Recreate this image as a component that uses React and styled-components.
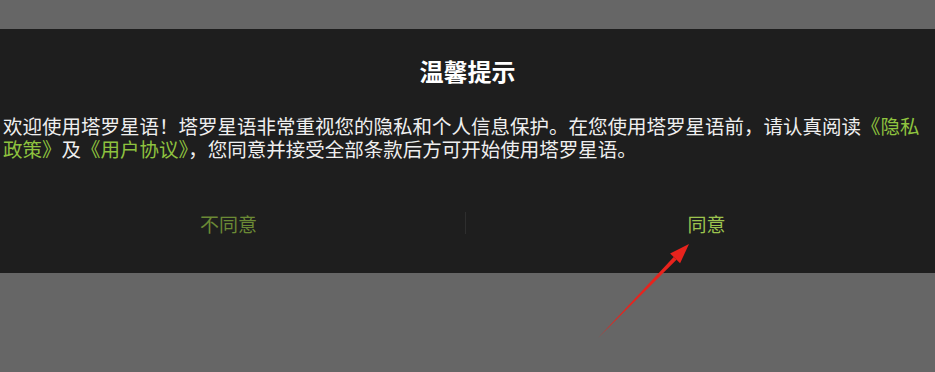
import React from "react";
import styled, { createGlobalStyle } from "styled-components";

const Global = createGlobalStyle`
  html, body { margin: 0; padding: 0; background: #666666; }
  body { font-family: "Noto Sans CJK SC", "Noto Sans", sans-serif; }
`;

const Page = styled.div`
  position: relative;
  width: 935px;
  height: 372px;
  padding-top: 29px;
  box-sizing: border-box;
  overflow: hidden;
`;

const Dialog = styled.div`
  background: #1e1e1e;
  height: 244px;
  display: flex;
  flex-direction: column;
  box-sizing: border-box;
  padding-top: 26px;
`;

const Title = styled.h2`
  margin: 0;
  text-align: center;
  color: #ffffff;
  font-size: 24px;
  line-height: 32px;
  font-weight: 700;
`;

const Body = styled.p`
  margin: 27px 0 0;
  padding: 0 3px;
  color: #efefef;
  font-size: 19.5px;
  line-height: 23px;
`;

const Link = styled.span`
  color: #8ec33f;
`;

const Actions = styled.div`
  margin-top: 38px;
  height: 50px;
  display: flex;
  align-items: center;
`;

const Action = styled.button`
  flex: 1;
  background: none;
  border: none;
  height: 100%;
  font-family: inherit;
  font-size: 19px;
  color: ${(p) => (p.$primary ? "#9cc44e" : "#6b8a35")};
  padding: ${(p) => (p.$primary ? "0 0 0 12px" : "0 8px 0 0")};
  cursor: pointer;
`;

const Divider = styled.div`
  width: 1px;
  height: 22px;
  background: #2e2e2e;
`;

const ArrowLayer = styled.svg`
  position: absolute;
  left: 580px;
  top: 230px;
  width: 120px;
  height: 120px;
  pointer-events: none;
`;

export default function App() {
  return (
    <>
      <Global />
      <Page>
        <Dialog>
          <Title>温馨提示</Title>
          <Body>
            欢迎使用塔罗星语！塔罗星语非常重视您的隐私和个人信息保护。在您使用塔罗星语前，请认真阅读
            <Link>《隐私政策》</Link>及<Link>《用户协议》</Link>，您同意并接受全部条款后方可开始使用塔罗星语。
          </Body>
          <Actions>
            <Action>不同意</Action>
            <Divider />
            <Action $primary>同意</Action>
          </Actions>
        </Dialog>
        <ArrowLayer viewBox="0 0 120 120">
          <polygon points="18,108 96.5,29.8 93.7,27" fill="#e8231d" />
          <polygon points="109,14 100.1,33.3 90.1,23.5" fill="#e8231d" />
        </ArrowLayer>
      </Page>
    </>
  );
}
